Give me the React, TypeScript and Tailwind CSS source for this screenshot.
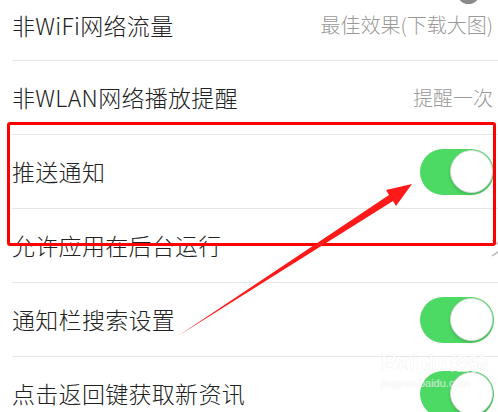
const font = "font-['Noto_Sans_CJK_SC','Noto_Sans',sans-serif]";

function Toggle() {
	return (
		<div className="w-[74px] h-[46px] rounded-full bg-[#4cd964] flex items-center justify-end pr-[1px]">
			<div className="w-[43px] h-[43px] rounded-full bg-white border border-[#d8d8d8] shadow-[0_2px_3px_rgba(0,0,0,0.15)]"></div>
		</div>
	);
}

function Row({
	label,
	right,
	first,
}: {
	label: string;
	right?: React.ReactNode;
	first?: boolean;
}) {
	return (
		<div
			className={`flex items-center justify-between border-b border-[#e6e6e6] ${
				first ? "h-[61px] pb-[10px]" : "h-[74px]"
			}`}
		>
			<p className="text-[23px] font-light text-[#222] leading-none tracking-[0.3px]">{label}</p>
			{right}
		</div>
	);
}

export default function App() {
	return (
		<div className={`relative w-[498px] h-[412px] overflow-hidden bg-white ${font}`}>
			<div className="absolute left-[457px] top-[-19px] w-[23px] h-[23px] rounded-full bg-[#8a8a8a]"></div>

			<div className="pl-[12px]">
				<Row
					first
					label="非WiFi网络流量"
					right={<p className="text-[20px] font-light text-[#999] pr-[5px] leading-none">最佳效果(下载大图)</p>}
				/>
				<Row
					label="非WLAN网络播放提醒"
					right={<p className="text-[20px] font-light text-[#999] pr-[5px] leading-none">提醒一次</p>}
				/>
				<Row
					label="推送通知"
					right={
						<div className="pr-[4px]">
							<Toggle />
						</div>
					}
				/>
				<Row
					label="允许应用在后台运行"
					right={
						<div className="w-[12px] h-[20px] overflow-hidden mr-[-4px] mt-[4px]">
							<svg width="16" height="20" viewBox="0 0 16 20" fill="none" stroke="#b8b8b8" strokeWidth="1.5">
								<path d="M2 2 L14 10 L2 18" />
							</svg>
						</div>
					}
				/>
				<Row
					label="通知栏搜索设置"
					right={
						<div className="pr-[4px]">
							<Toggle />
						</div>
					}
				/>
				<Row
					label="点击返回键获取新资讯"
					right={
						<div className="pr-[4px]">
							<Toggle />
						</div>
					}
				/>
			</div>

			{/* annotation box */}
			<div className="absolute left-[7px] top-[122px] w-[489px] h-[124px] border-[3px] border-[#ff0000] rounded-[3px]"></div>

			{/* annotation arrow */}
			<svg className="absolute left-0 top-0" width="498" height="412" viewBox="0 0 498 412">
				<polygon points="178,336 393,201 396,206 412,184 386,190 389,195" fill="#ff1a1a" />
			</svg>

			{/* watermark */}
			<div className="absolute left-[381px] top-[350px] flex flex-col items-start opacity-60">
				<div className="flex items-center gap-[3px]">
					<span className="text-[24px] font-bold text-white leading-none font-['Liberation_Sans',sans-serif] [text-shadow:0_0_1px_#d0d0d0]">Bai</span>
					<span className="text-[20px] font-bold text-white leading-none [text-shadow:0_0_1px_#d0d0d0]">du</span>
					<span className="text-[19px] font-bold text-white leading-none [text-shadow:0_0_1px_#d0d0d0]">经验</span>
				</div>
				<span className="text-[11px] text-white leading-none mt-[4px] font-['Liberation_Sans',sans-serif] [text-shadow:0_0_1px_#d0d0d0]">jingyan.baidu.com</span>
			</div>
		</div>
	);
}
